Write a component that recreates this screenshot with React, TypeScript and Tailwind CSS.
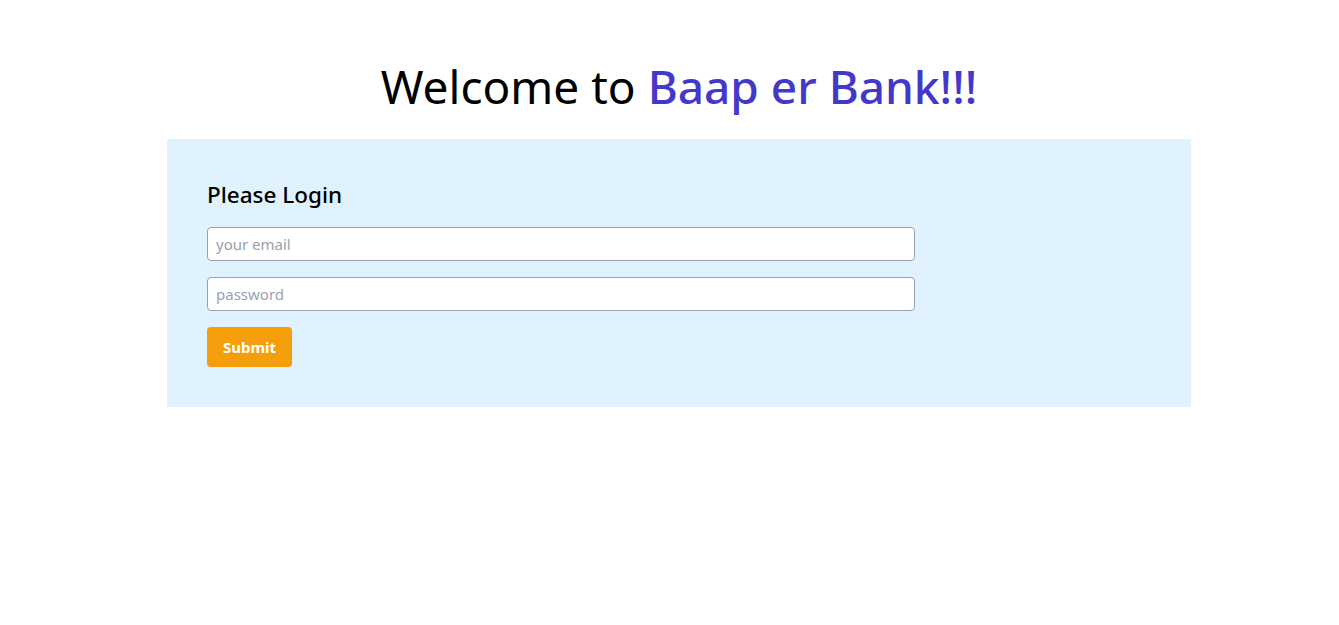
import React from "react";

const App = () => {
  return (
    <div className="min-h-screen bg-white font-['Noto_Sans',sans-serif]">
      <div className="ml-[167px] w-[1024px] pt-[56px]">
        <h1 className="text-center text-[46px] leading-[60px] font-normal text-black">
          Welcome to <span className="font-medium text-[#4338ca]">Baap er Bank!!!</span>
        </h1>
        <div className="mt-[23px] bg-[#e0f2fe] p-10">
          <h2 className="text-[22.5px] leading-8 font-medium text-black">Please Login</h2>
          <form className="mt-4 flex flex-col gap-4">
            <input
              type="email"
              placeholder="your email"
              className="w-3/4 h-[34px] rounded border border-gray-400 bg-white px-2 text-[15px] placeholder:text-gray-400 outline-none"
            />
            <input
              type="password"
              placeholder="password"
              className="w-3/4 h-[34px] rounded border border-gray-400 bg-white px-2 text-[15px] placeholder:text-gray-400 outline-none"
            />
            <div>
              <button
                type="submit"
                className="h-10 rounded bg-[#f59e0b] px-4 text-[15px] font-bold text-white"
              >
                Submit
              </button>
            </div>
          </form>
        </div>
      </div>
    </div>
  );
};

export default App;
